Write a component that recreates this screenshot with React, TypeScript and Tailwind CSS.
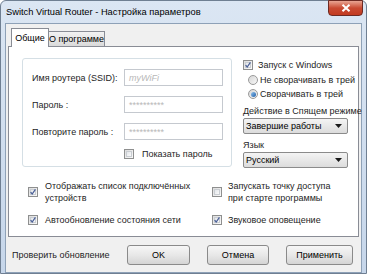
import React from "react";

const font = { fontFamily: '"Liberation Sans", Arial, sans-serif' };

function Check({ checked }: { checked?: boolean }) {
    return (
        <span className="relative flex h-[10px] w-[10px] shrink-0 items-center justify-center border border-[#8e8f8f] bg-gradient-to-br from-[#dcdcdc] to-[#fbfbfb]">
            <span className="absolute inset-[1px] border border-[#c9cdd2] bg-gradient-to-br from-[#e3e6ea] to-[#fafafa]" />
            {checked && (
                <svg viewBox="0 0 10 10" className="relative h-[8px] w-[8px]">
                    <path d="M2 5.2 L4 7.5 L8 1.8" fill="none" stroke="#4a5f97" strokeWidth="1.6" />
                </svg>
            )}
        </span>
    );
}

function Radio({ checked }: { checked?: boolean }) {
    return (
        <span className="flex h-[10px] w-[10px] shrink-0 items-center justify-center rounded-full border border-[#9a9a9a] bg-gradient-to-br from-[#d6d6d6] to-[#f8f8f8]">
            {checked && <span className="h-[5px] w-[5px] rounded-full bg-gradient-to-br from-[#8fc3ee] to-[#1f5fa8]" />}
        </span>
    );
}

function Select({ value }: { value: string }) {
    return (
        <div className="flex h-[16px] w-[105px] items-center justify-between rounded-[2px] border border-[#8b8b8b] bg-gradient-to-b from-[#f4f4f4] to-[#dcdcdc] pl-[2px] pr-[5px] text-[9px] leading-[12px] text-black">
            <span>{value}</span>
            <svg viewBox="0 0 7 4" className="h-[4px] w-[7px]">
                <path d="M0 0 H7 L3.5 4 Z" fill="#1a1a1a" />
            </svg>
        </div>
    );
}

function Field({ label, value, italic }: { label: string; value: string; italic?: boolean }) {
    return (
        <div className="flex items-center">
            <span className="w-[92px] text-[9px] leading-[12px] text-[#1e1e1e]">{label}</span>
            <div className={`flex h-[17px] w-[99px] items-center border border-[#c5c9cf] bg-white pl-[4px] text-[9px] leading-[12px] text-[#b8b8b8] ${italic ? "italic" : ""}`}>
                {value}
            </div>
        </div>
    );
}

function Button({ label, w }: { label: string; w: string }) {
    return (
        <div className={`flex h-[20px] ${w} items-center justify-center rounded-[3px] border border-[#8a8a8a] bg-gradient-to-b from-[#f6f6f6] via-[#e8e8e8] to-[#d4d4d4] text-[9px] leading-[12px] text-black`}>
            {label}
        </div>
    );
}

export default function App() {
    return (
        <div className="h-[274px] w-[369px] overflow-hidden bg-white" style={font}>
            <div className="flex h-[274px] w-[367px] flex-col rounded-t-[6px] border border-[#6f7f92] bg-gradient-to-b from-[#dbe6f3] to-[#c6d6ea]">
                {/* Title bar */}
                <div className="relative flex h-[22px] items-center pl-[5px]">
                    <span className="text-[9.3px] leading-[12px] text-black">Switch Virtual Router - Настройка параметров</span>
                    <div className="absolute right-[3px] top-[-1px] flex h-[16px] w-[35px] items-center justify-center rounded-b-[4px] border border-[#6d2a23] bg-gradient-to-b from-[#e8a493] via-[#c94a32] to-[#c23a20]">
                        <svg viewBox="0 0 10 8" className="h-[8px] w-[10px]">
                            <path d="M1.5 0.8 L8.5 7.2 M8.5 0.8 L1.5 7.2" stroke="#fff" strokeWidth="2" />
                        </svg>
                    </div>
                </div>

                {/* Client area */}
                <div className="ml-[4px] mr-[4px] flex flex-1 flex-col border border-[#8ea1b7] bg-[#f0f0f0] px-[2px] pt-[3px]">
                    {/* Tabs */}
                    <div className="flex h-[19px] items-end pl-[3px]">
                        <div className="relative z-10 -mb-px flex h-[19px] w-[38px] items-center justify-center border border-b-0 border-[#898c95] bg-white text-[9px] leading-[12px] text-black">
                            Общие
                        </div>
                        <div className="flex h-[15px] w-[56px] items-center justify-center whitespace-nowrap border border-b-0 border-l-0 border-[#898c95] bg-gradient-to-b from-[#f2f2f2] to-[#dadada] text-[9px] leading-[12px] text-black">
                            О программе
                        </div>
                    </div>

                    {/* Panel */}
                    <div className="flex h-[191px] flex-col border border-[#898c95] bg-white pl-[13px] pt-[11px]">
                        <div className="flex">
                            {/* Group box */}
                            <div className="flex h-[109px] w-[210px] flex-col gap-[10px] rounded-[3px] border border-[#d5dfe5] pl-[9px] pt-[10px]">
                                <Field label="Имя роутера (SSID):" value="myWiFi" italic />
                                <Field label="Пароль :" value="**********" />
                                <Field label="Повторите пароль :" value="**********" />
                                <div className="-mt-[2px] flex items-center gap-[8px] pl-[92px]">
                                    <Check />
                                    <span className="text-[9px] leading-[12px] text-[#1e1e1e]">Показать пароль</span>
                                </div>
                            </div>

                            {/* Right column */}
                            <div className="ml-[11px] flex w-[105px] flex-col">
                                <div className="flex items-center gap-[5px] pt-[1px]">
                                    <Check checked />
                                    <span className="whitespace-nowrap text-[9px] leading-[12px] text-[#1e1e1e]">Запуск с Windows</span>
                                </div>
                                <div className="mt-[3px] flex items-center gap-[2px] pl-[5px]">
                                    <Radio />
                                    <span className="whitespace-nowrap text-[9px] leading-[12px] text-[#1e1e1e]">Не сворачивать в трей</span>
                                </div>
                                <div className="mt-[2px] flex items-center gap-[2px] pl-[5px]">
                                    <Radio checked />
                                    <span className="whitespace-nowrap text-[9px] leading-[12px] text-[#1e1e1e]">Сворачивать в трей</span>
                                </div>
                                <span className="mt-[5px] whitespace-nowrap text-[9px] leading-[12px] text-[#1e1e1e]">Действие в Спящем режиме</span>
                                <div className="mt-[1px]">
                                    <Select value="Завершие работы" />
                                </div>
                                <span className="mt-[5px] text-[9px] leading-[12px] text-[#1e1e1e]">Язык</span>
                                <div className="mt-[1px]">
                                    <Select value="Русский" />
                                </div>
                            </div>
                        </div>

                        {/* Bottom options */}
                        <div className="mt-[12px] grid grid-cols-[184px_1fr] gap-y-[10px] pl-[6px]">
                            <div className="flex items-center gap-[7px]">
                                <Check checked />
                                <span className="text-[9px] leading-[12px] text-[#1e1e1e]">Отображать список подключённых<br />устройств</span>
                            </div>
                            <div className="flex items-center gap-[6px]">
                                <Check />
                                <span className="text-[9px] leading-[12px] text-[#1e1e1e]">Запускать точку доступа<br />при старте программы</span>
                            </div>
                            <div className="flex items-center gap-[7px]">
                                <Check checked />
                                <span className="text-[9px] leading-[12px] text-[#1e1e1e]">Автообновление состояния сети</span>
                            </div>
                            <div className="flex items-center gap-[6px]">
                                <Check checked />
                                <span className="text-[9px] leading-[12px] text-[#1e1e1e]">Звуковое оповещение</span>
                            </div>
                        </div>
                    </div>

                    {/* Footer */}
                    <div className="flex items-center pl-[4px] pt-[8px]">
                        <span className="w-[115px] text-[9px] leading-[12px] text-[#1e1e1e]">Проверить обновление</span>
                        <Button label="OK" w="w-[63px]" />
                        <div className="w-[17px]" />
                        <Button label="Отмена" w="w-[62px]" />
                        <div className="w-[17px]" />
                        <Button label="Применить" w="w-[67px]" />
                    </div>
                </div>
            </div>
        </div>
    );
}
